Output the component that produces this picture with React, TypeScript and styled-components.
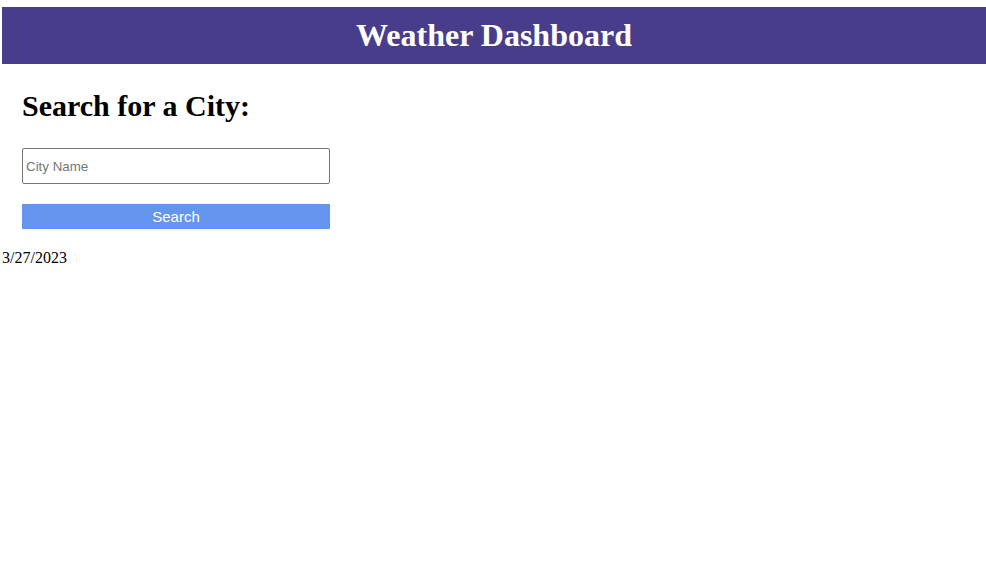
import React from "react";
import styled, { createGlobalStyle } from "styled-components";

const Global = createGlobalStyle`
  html, body { margin: 0; padding: 0; background: #ffffff; }
  body { font-family: "Liberation Serif", "Times New Roman", serif; font-size: 16px; color: #000; }
`;

const Page = styled.div`
  padding: 7px 0 0 2px;
`;

const Header = styled.header`
  height: 57px;
  background: #483d8b;
  display: flex;
  align-items: center;
  justify-content: center;
`;

const Title = styled.h1`
  margin: 0;
  font-family: "Liberation Serif", "Times New Roman", serif;
  font-size: 32px;
  font-weight: bold;
  color: #ffffff;
  line-height: 37px;
`;

const SearchSection = styled.section`
  padding-left: 20px;
  display: flex;
  flex-direction: column;
  align-items: flex-start;
`;

const SectionTitle = styled.h2`
  margin: 25px 0 25px;
  font-family: "Liberation Serif", "Times New Roman", serif;
  font-size: 30px;
  font-weight: bold;
  line-height: 34px;
`;

const CityInput = styled.input`
  box-sizing: border-box;
  width: 308px;
  height: 36px;
  margin: 0 0 20px;
  padding: 0 3px;
  border: 1px solid #767676;
  border-radius: 2px;
  font-family: "Liberation Sans", Arial, sans-serif;
  font-size: 13.33px;
  color: #000;
  &::placeholder { color: #757575; }
`;

const SearchButton = styled.button`
  box-sizing: border-box;
  width: 308px;
  height: 25px;
  margin: 0;
  border: none;
  background: #6495ed;
  color: #ffffff;
  font-family: "Liberation Sans", Arial, sans-serif;
  font-size: 15px;
  padding: 0;
  cursor: pointer;
`;

const DateLine = styled.div`
  margin-top: 20px;
  font-size: 16px;
  line-height: 18px;
`;

export default function App() {
  return (
    <>
      <Global />
      <Page>
        <Header>
          <Title>Weather Dashboard</Title>
        </Header>
        <SearchSection>
          <SectionTitle>Search for a City:</SectionTitle>
          <CityInput type="text" placeholder="City Name" />
          <SearchButton type="button">Search</SearchButton>
        </SearchSection>
        <DateLine>3/27/2023</DateLine>
      </Page>
    </>
  );
}
